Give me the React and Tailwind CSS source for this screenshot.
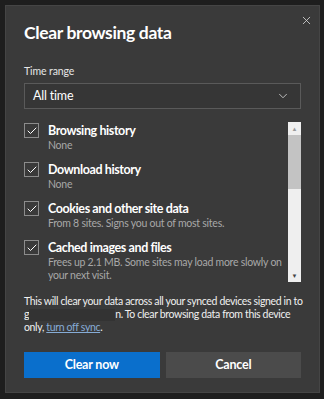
import { X, ChevronDown, Check } from "lucide-react";

const items = [
  { title: "Browsing history", sub: ["None"] },
  { title: "Download history", sub: ["None"] },
  { title: "Cookies and other site data", sub: ["From 8 sites. Signs you out of most sites."] },
  {
    title: "Cached images and files",
    sub: ["Frees up 2.1 MB. Some sites may load more slowly on", "your next visit."],
  },
];

const App = () => {
  return (
    <div
      className="w-[324px] h-[399px] bg-[#1e1e1e] pt-[5px] pl-[5px] pr-[4px] pb-[6px] overflow-hidden"
      style={{ fontFamily: 'Lato, "Noto Sans", sans-serif' }}
    >
      <div className="h-full bg-[#3a3a3a] border border-[#454545] flex flex-col px-[18px] pt-[9px] text-white">
        {/* Header */}
        <div className="flex justify-between items-start">
          <h1 className="text-[17.5px] font-bold leading-[22px] mt-[7px] tracking-[-0.35px]">Clear browsing data</h1>
          <X size={13} strokeWidth={1.5} className="text-[#d8d8d8] -mr-[12px] -mt-[1px]" />
        </div>

        {/* Time range */}
        <div className="mt-[20px] text-[10.5px] leading-[14px] text-[#e6e6e6] tracking-[-0.1px]">Time range</div>
        <div className="mt-[5px] h-[26px] border border-[#5a5a5a] bg-[#363636] flex items-center justify-between pl-[8px] pr-[10px]">
          <span className="text-[12.5px] tracking-[-0.2px]">All time</span>
          <ChevronDown size={14} strokeWidth={1.5} className="text-[#cfcfcf]" />
        </div>

        {/* List with scrollbar */}
        <div className="mt-[13px] flex gap-[6px] h-[160px]">
          <div className="flex-1 flex flex-col gap-[10px] pt-[1px] overflow-hidden">
            {items.map((it) => (
              <div key={it.title} className="flex gap-[9px]">
                <div className="w-[15px] h-[15px] border border-[#8c8c8c] flex items-center justify-center shrink-0">
                  <Check size={12} strokeWidth={2} className="text-white" />
                </div>
                <div className="flex flex-col">
                  <span className="text-[12.5px] font-bold leading-[16px] tracking-[-0.4px]">{it.title}</span>
                  {it.sub.map((line) => (
                    <span key={line} className="text-[10.5px] leading-[13px] text-[#a8a8a8] tracking-[-0.25px] whitespace-nowrap">
                      {line}
                    </span>
                  ))}
                </div>
              </div>
            ))}
          </div>
          <div className="w-[13px] bg-[#efefef] flex flex-col items-center h-[160px]">
            <div className="text-[6px] leading-[13px] text-[#9a9a9a]">▲</div>
            <div className="w-full h-[54px] bg-[#c3c3c3]" />
            <div className="flex-1" />
            <div className="text-[6px] leading-[13px] text-[#444]">▼</div>
          </div>
        </div>

        {/* Sync note */}
        <p className="mt-[13px] text-[10.5px] leading-[13px] text-[#f0f0f0] tracking-[-0.35px] whitespace-nowrap">
          This will clear your data across all your synced devices signed in to
          <br />
          g<span className="inline-block align-middle w-[86px] h-[12px] bg-[#333333]" />n. To clear browsing data from this device
          <br />
          only, <span className="text-[#86acd6] underline">turn off sync</span>.
        </p>

        {/* Buttons */}
        <div className="mt-[18px] grid grid-cols-2 gap-[6px]">
          <button className="h-[26px] bg-[#0a6fcc] text-[12.5px] font-bold text-white tracking-[-0.2px]">Clear now</button>
          <button className="h-[26px] bg-[#4b4b4b] text-[12.5px] font-bold text-white tracking-[-0.2px]">Cancel</button>
        </div>
      </div>
    </div>
  );
};

export default App;
